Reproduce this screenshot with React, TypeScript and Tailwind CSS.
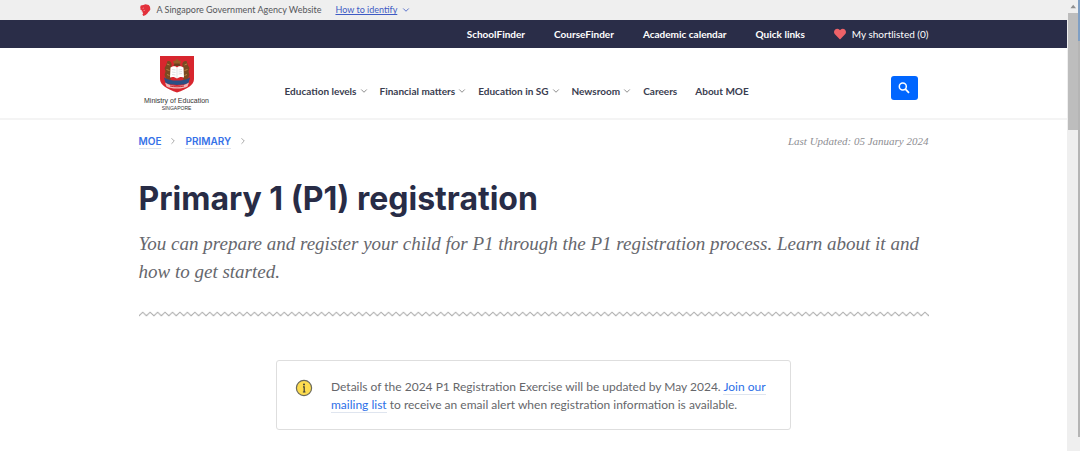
import { ChevronDown, ChevronRight } from "lucide-react";
import { FaHeart } from "react-icons/fa";

const utilityLinks = ["SchoolFinder", "CourseFinder", "Academic calendar", "Quick links"];

const menus = ["Education levels", "Financial matters", "Education in SG", "Newsroom"];

function LionIcon() {
  return (
    <svg viewBox="0 0 12 13" className="w-3 h-3 shrink-0" aria-hidden="true">
      <path
        d="M1.4 1.6 4.2 1 6.6.2l3.4 1L11.4 3l.4 3-1.2 1.8-1 .9-.8 1.4-2 1.7-2.6 1.1-1-1.4.9-1.6-.9-.9.3-1-1.3-.2.4-1.2-1.6-.4.1-1.4-.3-1.2Z"
        fill="#e3303b"
      />
      <path d="m3 4.6 2-.7-.8 1.2Zm1.4 2.1 1.8-.6-.5 1-1.2.6Z" fill="#f3a9ad" />
    </svg>
  );
}

function Crest() {
  return (
    <svg viewBox="0 0 68 74" className="w-[34px] h-[37px]" aria-hidden="true">
      <path d="M0 0h68v46c0 12-14 20-34 27C14 66 0 58 0 46Z" fill="#d8262e" />
      {/* lions on both sides of the book */}
      <path d="M15 10c6-1 9 4 8 9l-2 8 2 8-2 13-8-1-4-9 2-7-2-7 3-5Z" fill="#7a4a22" />
      <path d="M53 10c-6-1-9 4-8 9l2 8-2 8 2 13 8-1 4-9-2-7 2-7-3-5Z" fill="#7a4a22" />
      <path d="m14 16 5 2m-6 9 6 2m-5 8 5 2m35-23-5 2m6 9-6 2m5 8-5 2" stroke="#b98545" strokeWidth="2" />
      <path d="m34 5 3 4 5 1-2 6h-12l-2-6 5-1Z" fill="#96602b" />
      <path d="M29 15h10l2 5H27Z" fill="#6c3e20" />
      <path d="M21 23c6-4 10-3 13 0 3-3 7-4 13 0l1 20c-5-2-10-1-14 2-4-3-9-4-14-2Z" fill="#fff" />
      <path d="M34 23v21M24 27l7 1m-7 4 7 1m-7 4 7 1m6-10 7-1m-7 5 7-1m-7 5 7-1" stroke="#bfc4c9" strokeWidth="1" fill="none" />
      <path d="M8 43c8 5 17 6 26 6s18-1 26-6l-3 11c-7 5-39 5-46 0Z" fill="#2c4f85" />
      <path d="M10 53c7 5 16 7 24 7s17-2 24-7l-3 8c-6 3-12 4-21 4s-15-1-21-4Z" fill="#f0b7b9" />
      <path d="M20 60c8 2 20 2 28 0" stroke="#c62931" strokeWidth="2" fill="none" />
    </svg>
  );
}

function SearchIcon() {
  return (
    <svg viewBox="0 0 12 12" className="w-3 h-3" fill="none" stroke="currentColor" aria-hidden="true">
      <circle cx="4.8" cy="4.6" r="3.5" strokeWidth="1.5" />
      <path d="M7.4 7.2 11 10.8" strokeWidth="1.8" />
    </svg>
  );
}

function InfoIcon() {
  return (
    <svg viewBox="0 0 18 18" className="w-[18px] h-[18px] shrink-0" aria-hidden="true">
      <circle cx="9" cy="9" r="7.6" fill="#fddc50" stroke="#6b6a5c" strokeWidth="1.2" />
      <circle cx="9" cy="5.4" r="1" fill="#3c3c35" />
      <path d="M8 7.8H9.2V13M7.9 13H10.5" stroke="#3c3c35" strokeWidth="1.2" fill="none" />
    </svg>
  );
}

function ZigZag() {
  return (
    <svg className="block w-full h-[6px]" aria-hidden="true">
      <defs>
        <pattern id="zigzag" width="7.45" height="6" patternUnits="userSpaceOnUse">
          <path d="M-.5 5.3 0 4.8 3.725 1.2 7.45 4.8 8 5.3" fill="none" stroke="#b0b0b0" strokeWidth="1.1" />
        </pattern>
      </defs>
      <rect width="100%" height="6" fill="url(#zigzag)" />
    </svg>
  );
}

function Masthead() {
  return (
    <div className="bg-[#efefef]">
      <div className="max-w-[790px] mx-auto h-5 flex items-center text-[9px] text-[#55565a]">
        <LionIcon />
        <span className="ml-[6px]">A Singapore Government Agency Website</span>
        <button className="ml-[14px] flex items-center gap-1 text-[#3f5bc4]">
          <span className="underline">How to identify</span>
          <ChevronDown size={10} />
        </button>
      </div>
    </div>
  );
}

function UtilityBar() {
  return (
    <nav aria-label="Utility" className="bg-[#2a2d48] text-white">
      <div className="max-w-[790px] mx-auto h-7 flex items-center justify-end gap-[29px] text-[10px]">
        {utilityLinks.map((label) => (
          <a key={label} href="#" className="font-bold">{label}</a>
        ))}
        <a href="#" className="flex items-center gap-[6px]">
          <FaHeart size={12} className="text-[#ee6268]" />
          My shortlisted (0)
        </a>
      </div>
    </nav>
  );
}

function Header() {
  return (
    <header className="border-b-2 border-[#f4f4f4]">
      <div className="max-w-[790px] mx-auto h-[70px] flex items-center">
        <a
          href="#"
          className="w-[76px] flex flex-col items-center text-[#333] font-['Liberation_Sans',sans-serif]"
        >
          <Crest />
          <span className="mt-[3px] text-[7px] leading-[9px] whitespace-nowrap">Ministry of Education</span>
          <span className="text-[5px] leading-[6px]">SINGAPORE</span>
        </a>
        <nav aria-label="Main" className="ml-[70px] mt-4 flex items-center text-[10px] font-bold text-[#3a3d50]">
          <div className="flex gap-[11px]">
            {menus.map((label) => (
              <button key={label} className="flex items-center gap-[2px]">
                {label}
                <ChevronDown size={10} className="text-[#777]" />
              </button>
            ))}
            <a href="#">Careers</a>
          </div>
          <a href="#" className="ml-[18px]">About MOE</a>
        </nav>
        <button
          aria-label="Search"
          className="ml-auto mr-[11px] mt-[10px] w-[27px] h-6 flex items-center justify-center rounded-[3px] bg-[#0066ff] text-white"
        >
          <SearchIcon />
        </button>
      </div>
    </header>
  );
}

function Breadcrumb() {
  return (
    <div className="flex items-center justify-between">
      <nav
        aria-label="Breadcrumb"
        className="flex items-center gap-[7px] text-[10px] leading-[14px] font-semibold text-[#3672e8] font-['Inter',sans-serif]"
      >
        <a href="#" className="border-b border-[#dfe5ef]">MOE</a>
        <ChevronRight size={10} className="text-[#999]" />
        <a href="#" className="border-b border-[#dfe5ef]">PRIMARY</a>
        <ChevronRight size={10} className="text-[#999]" />
      </nav>
      <p className="text-[11px] italic text-[#8e8e93] font-['Liberation_Serif',serif]">
        Last Updated: 05 January 2024
      </p>
    </div>
  );
}

function Notice() {
  return (
    <div className="max-w-[515px] mx-auto mt-[43px] flex gap-[18px] rounded-[3px] border border-[#dedede] px-[18px] pt-[17px] pb-[15px]">
      <div className="pt-px">
        <InfoIcon />
      </div>
      <p className="text-[12px] leading-[18px] text-[#66676b]">
        Details of the 2024 P1 Registration Exercise will be updated by May 2024.{" "}
        <a href="#" className="text-[#2c6fe8] border-b border-[#dfe5ef]">Join our mailing list</a>{" "}
        to receive an email alert when registration information is available.
      </p>
    </div>
  );
}

function ScrollRail() {
  return (
    <div className="w-[13px] shrink-0 flex bg-[#efefef]" aria-hidden="true">
      <div className="flex-1 pl-px">
        <svg viewBox="0 0 10 13" className="block w-[10px] h-[13px]">
          <path d="M2.5 8.2 5.2 4.8 8 8.2Z" fill="#8f8f8f" />
        </svg>
        <div className="w-[10px] h-[117px] bg-[#bdbdbd]" />
      </div>
      <div className="w-[2px] mb-[14px] bg-[#b5b5b5]">
        <div className="w-full h-[41px] bg-[#7f9fc4]" />
      </div>
    </div>
  );
}

export default function App() {
  return (
    <div className="min-h-screen flex bg-white font-['Lato',sans-serif]">
      <div className="flex-1 min-w-0">
        <Masthead />
        <UtilityBar />
        <Header />
        <main className="max-w-[790px] mx-auto pt-[13px] pb-5">
          <Breadcrumb />
          <h1 className="mt-[29px] text-[32px] leading-[40px] font-bold text-[#282c46] font-['Inter',sans-serif]">
            Primary 1 (P1) registration
          </h1>
          <p className="mt-[11px] mb-[25px] text-[19px] leading-[28px] italic text-[#66676d] font-['Liberation_Serif',serif]">
            You can prepare and register your child for P1 through the P1 registration process. Learn about it and
            how to get started.
          </p>
          <ZigZag />
          <Notice />
        </main>
      </div>
      <ScrollRail />
    </div>
  );
}
